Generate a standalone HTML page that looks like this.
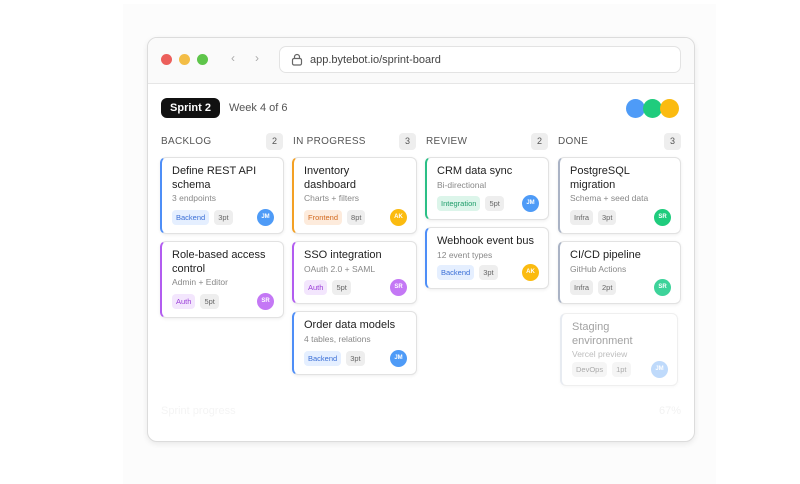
<!DOCTYPE html>
<html><head><style>
*{box-sizing:border-box;margin:0;padding:0}
body{width:800px;height:480px;background:#fff;font-family:"Liberation Sans",sans-serif;position:relative;overflow:hidden}
.bg{position:absolute;left:123px;top:4px;width:593px;height:480px;background:#fcfcfc}
.win{position:absolute;left:147px;top:37px;width:548px;height:405px;background:#fff;border:1px solid #dcdcdc;border-radius:10px;box-shadow:0 2px 6px rgba(0,0,0,.08);overflow:hidden}
.bar{position:absolute;left:0;top:0;width:100%;height:46px;background:#fafafa;border-bottom:1px solid #e6e6e6}
.dot{position:absolute;top:16px;width:11px;height:11px;border-radius:50%}
.url{position:absolute;left:131px;top:8px;width:402px;height:27px;border:1px solid #e3e3e3;border-radius:7px;background:#fff;font-size:11px;color:#444;padding:7px 0 0 30px}
.ab{position:absolute;font-size:12px;color:#aaa;top:13px}
.pill{position:absolute;left:13px;top:60px;width:59px;height:20px;background:#111;color:#fff;border-radius:6px;font-size:11px;font-weight:bold;text-align:center;line-height:20px}
.wk{position:absolute;left:81px;top:64px;font-size:11px;color:#555}
.hav{position:absolute;top:61px;width:19px;height:19px;border-radius:50%}
.ch{position:absolute;top:98px;font-size:10px;color:#555;letter-spacing:.3px}
.cnt{position:absolute;top:95px;width:17px;height:17px;background:#eee;border-radius:4px;font-size:9px;color:#555;text-align:center;line-height:17px}
.card{position:absolute;background:#fff;border:1px solid #e2e2e2;border-left:2px solid;border-radius:6px;box-shadow:0 1px 3px rgba(0,0,0,.07);padding:7px 0 0 10px}
.t{font-size:11px;color:#222;line-height:13.5px}
.s{font-size:8.5px;color:#888;margin-top:1px}
.tags{position:absolute;left:10px;bottom:8px;display:flex;gap:5px}
.tag{font-size:7.5px;padding:3px 4px;border-radius:4px;background:#eee;color:#666}
.av{position:absolute;right:9px;bottom:7px;width:17px;height:17px;border-radius:50%;color:#fff;font-size:6px;font-weight:bold;text-align:center;line-height:17px}
.B{background:#e5efff;color:#3b6fd6}.F{background:#fdebdc;color:#d2691e}.A{background:#f3e6fd;color:#9b3fd8}.I{background:#dcf5ea;color:#1f9d6a}
</style></head><body>
<div class="bg"></div>
<div class="win">
<div class="bar">
<div class="dot" style="left:13px;background:#ec5f5b"></div>
<div class="dot" style="left:31px;background:#f3bd46"></div>
<div class="dot" style="left:49px;background:#5ec54a"></div>
<div class="ab" style="left:83px">‹</div><div class="ab" style="left:107px">›</div>
<div class="url"><svg style="position:absolute;left:11px;top:6px" width="12" height="13" viewBox="0 0 12 13"><rect x="1.5" y="5.5" width="9" height="6.5" rx="1.5" fill="none" stroke="#666" stroke-width="1.2"/><path d="M3.5 5.5V4a2.5 2.5 0 015 0v1.5" fill="none" stroke="#666" stroke-width="1.2"/></svg>app.bytebot.io/sprint-board</div>
</div>
<div class="pill">Sprint 2</div><div class="wk">Week 4 of 6</div>
<div class="hav" style="left:478px;background:#4e9bf7"></div>
<div class="hav" style="left:495px;background:#1fcc7d"></div>
<div class="hav" style="left:512px;background:#fbbb10"></div>

<div class="ch" style="left:13px">BACKLOG</div><div class="cnt" style="left:118px">2</div>
<div class="ch" style="left:145px">IN PROGRESS</div><div class="cnt" style="left:251px">3</div>
<div class="ch" style="left:278px">REVIEW</div><div class="cnt" style="left:383px">2</div>
<div class="ch" style="left:410px">DONE</div><div class="cnt" style="left:516px">3</div>

<div class="card" style="left:12px;top:119px;width:124px;height:77px;border-left-color:#4e8ef7"><div class="t">Define REST API<br>schema</div><div class="s">3 endpoints</div><div class="tags"><span class="tag B">Backend</span><span class="tag">3pt</span></div><div class="av" style="background:#4e9bf7">JM</div></div>
<div class="card" style="left:12px;top:203px;width:124px;height:77px;border-left-color:#b25cf0"><div class="t">Role-based access<br>control</div><div class="s">Admin + Editor</div><div class="tags"><span class="tag A">Auth</span><span class="tag">5pt</span></div><div class="av" style="background:#c478f5">SR</div></div>

<div class="card" style="left:144px;top:119px;width:125px;height:77px;border-left-color:#f3a024"><div class="t">Inventory<br>dashboard</div><div class="s">Charts + filters</div><div class="tags"><span class="tag F">Frontend</span><span class="tag">8pt</span></div><div class="av" style="background:#fbbb10">AK</div></div>
<div class="card" style="left:144px;top:203px;width:125px;height:63px;border-left-color:#b25cf0"><div class="t">SSO integration</div><div class="s">OAuth 2.0 + SAML</div><div class="tags"><span class="tag A">Auth</span><span class="tag">5pt</span></div><div class="av" style="background:#c478f5">SR</div></div>
<div class="card" style="left:144px;top:273px;width:125px;height:64px;border-left-color:#4e8ef7"><div class="t">Order data models</div><div class="s">4 tables, relations</div><div class="tags"><span class="tag B">Backend</span><span class="tag">3pt</span></div><div class="av" style="background:#4e9bf7">JM</div></div>

<div class="card" style="left:277px;top:119px;width:124px;height:63px;border-left-color:#2bbf86"><div class="t">CRM data sync</div><div class="s">Bi-directional</div><div class="tags"><span class="tag I">Integration</span><span class="tag">5pt</span></div><div class="av" style="background:#4e9bf7">JM</div></div>
<div class="card" style="left:277px;top:189px;width:124px;height:62px;border-left-color:#4e8ef7"><div class="t">Webhook event bus</div><div class="s">12 event types</div><div class="tags"><span class="tag B">Backend</span><span class="tag">3pt</span></div><div class="av" style="background:#fbbb10">AK</div></div>

<div class="card" style="left:410px;top:119px;width:123px;height:77px;border-left-color:#aab3c5"><div class="t">PostgreSQL<br>migration</div><div class="s">Schema + seed data</div><div class="tags"><span class="tag">Infra</span><span class="tag">3pt</span></div><div class="av" style="background:#1fcc7d">SR</div></div>
<div class="card" style="left:410px;top:203px;width:123px;height:63px;border-left-color:#aab3c5"><div class="t">CI/CD pipeline</div><div class="s">GitHub Actions</div><div class="tags"><span class="tag">Infra</span><span class="tag">2pt</span></div><div class="av" style="background:#3dd39a">SR</div></div>
<div class="card" style="left:412px;top:275px;width:118px;height:73px;border-left-color:#d5dbe6;opacity:.55"><div class="t" style="color:#555">Staging<br>environment</div><div class="s">Vercel preview</div><div class="tags"><span class="tag">DevOps</span><span class="tag">1pt</span></div><div class="av" style="background:#8bbcf8">JM</div></div>

<div style="position:absolute;left:13px;top:367px;font-size:11px;color:#f4f4f4">Sprint progress</div>
<div style="position:absolute;left:511px;top:367px;font-size:11px;color:#f2f2f2">67%</div>
</div>
</body></html>
